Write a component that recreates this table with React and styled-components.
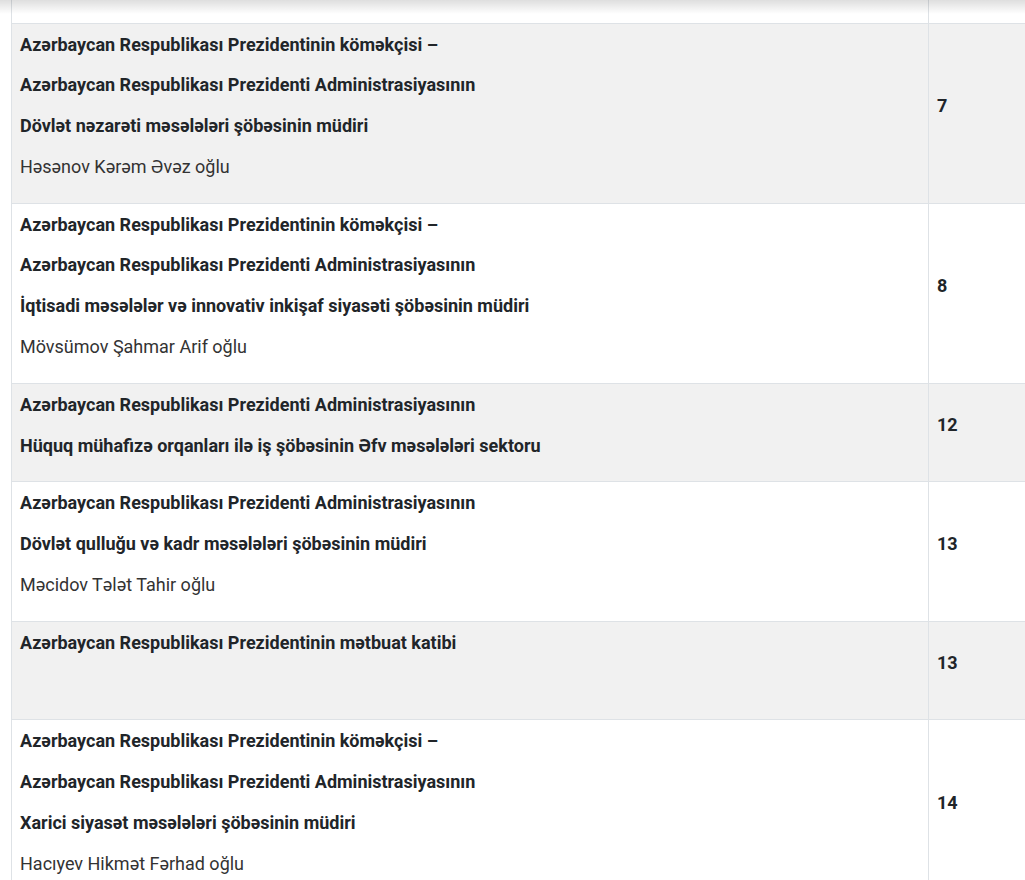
import React from "react";
import styled, { createGlobalStyle } from "styled-components";

const GlobalStyle = createGlobalStyle`
body{
    margin:0;
    background:#fff;
    font-family: Roboto, "Noto Sans", "Liberation Sans", sans-serif;
    font-size:18px;
    color:#212529;
}
`;

const Page = styled.div`
position:relative;
padding-left:11px;
overflow:hidden;
height:880px;
`;

const TopShade = styled.div`
position:absolute;
left:0;
top:0;
right:0;
height:14px;
background:linear-gradient(to bottom, rgba(0,0,0,0.13), rgba(0,0,0,0));
pointer-events:none;
`;

const Table = styled.table`
border-collapse:collapse;
width:1120px;
td{
    border:1px solid #dee2e6;
    padding:8px;
    vertical-align:middle;
}
td:first-child{
    width:900px;
}
p{
    margin:0 0 15.8px;
    line-height:25px;
}
`;

const Row = styled.tr`
background:${p => (p.$shade ? "#f1f1f1" : "#fff")};
`;

const EmptyRow = styled.tr`
height:23px;
td{
    padding:0;
    border-top:none;
}
`;

const Title = styled.p`
font-weight:700;
color:#212529;
`;

const Name = styled.p`
font-weight:400;
color:#333;
`;

const Num = styled.p`
font-weight:700;
`;

const data = [
    {
        lines: [
            "Azərbaycan Respublikası Prezidentinin köməkçisi –",
            "Azərbaycan Respublikası Prezidenti Administrasiyasının",
            "Dövlət nəzarəti məsələləri şöbəsinin müdiri",
        ],
        name: "Həsənov Kərəm Əvəz oğlu",
        num: "7",
    },
    {
        lines: [
            "Azərbaycan Respublikası Prezidentinin köməkçisi –",
            "Azərbaycan Respublikası Prezidenti Administrasiyasının",
            "İqtisadi məsələlər və innovativ inkişaf siyasəti şöbəsinin müdiri",
        ],
        name: "Mövsümov Şahmar Arif oğlu",
        num: "8",
    },
    {
        lines: [
            "Azərbaycan Respublikası Prezidenti Administrasiyasının",
            "Hüquq mühafizə orqanları ilə iş şöbəsinin Əfv məsələləri sektoru",
        ],
        num: "12",
    },
    {
        lines: [
            "Azərbaycan Respublikası Prezidenti Administrasiyasının",
            "Dövlət qulluğu və kadr məsələləri şöbəsinin müdiri",
        ],
        name: "Məcidov Tələt Tahir oğlu",
        num: "13",
    },
    {
        lines: ["Azərbaycan Respublikası Prezidentinin mətbuat katibi"],
        name: "\u00a0",
        num: "13",
    },
    {
        lines: [
            "Azərbaycan Respublikası Prezidentinin köməkçisi –",
            "Azərbaycan Respublikası Prezidenti Administrasiyasının",
            "Xarici siyasət məsələləri şöbəsinin müdiri",
        ],
        name: "Hacıyev Hikmət Fərhad oğlu",
        num: "14",
    },
];

const App = () => {
    return (
        <Page>
            <GlobalStyle />
            <Table>
                <tbody>
                    <EmptyRow>
                        <td></td>
                        <td></td>
                    </EmptyRow>
                    {data.map((r, i) => (
                        <Row key={i} $shade={i % 2 === 0}>
                            <td>
                                {r.lines.map((l, j) => (
                                    <Title key={j}>{l}</Title>
                                ))}
                                {r.name && <Name>{r.name}</Name>}
                            </td>
                            <td>
                                <Num>{r.num}</Num>
                            </td>
                        </Row>
                    ))}
                </tbody>
            </Table>
            <TopShade />
        </Page>
    );
};

export default App;
